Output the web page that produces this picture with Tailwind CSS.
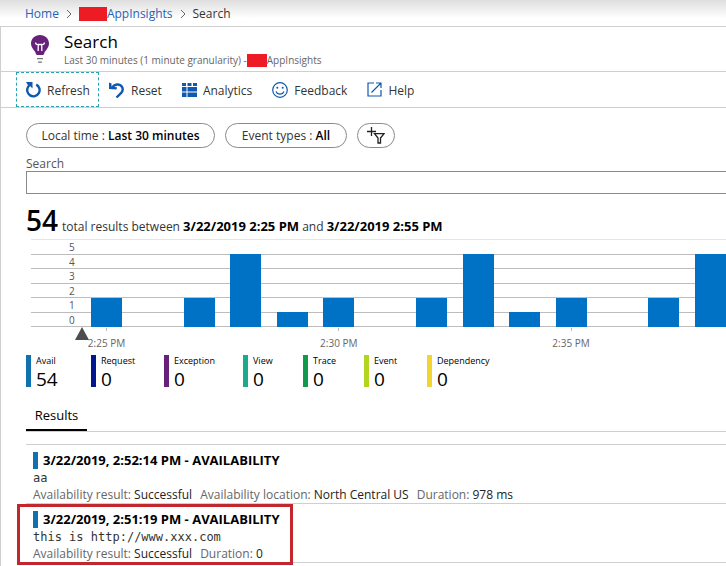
<!DOCTYPE html>
<html lang="en">

<head>
  <meta charset="UTF-8">
  <meta name="viewport" content="width=device-width, initial-scale=1.0">
  <title>Search - AppInsights</title>
  <script src="https://cdn.jsdelivr.net/npm/@tailwindcss/browser@4"></script>
</head>

<body class="min-h-screen flex flex-col overflow-x-hidden bg-white font-['Open_Sans',sans-serif] text-xs text-[#333333]">

  <!-- breadcrumb -->
  <nav aria-label="Breadcrumb" class="h-[26px] shrink-0 flex items-center gap-[7px] pl-[25px] pt-[2px] bg-linear-to-b from-[#dedede] to-white to-70%">
    <a href="#" class="text-[#2563b8]">Home</a>
    <svg class="w-[6px] h-[10px]" viewBox="0 0 6 10" fill="none" stroke="#666666"><path d="M1 1l4 4-4 4"></path></svg>
    <a href="#" class="flex items-center text-[#2563b8]"><span class="w-7 h-[14px] bg-[#ed1c24]"></span>AppInsights</a>
    <svg class="w-[6px] h-[10px]" viewBox="0 0 6 10" fill="none" stroke="#666666"><path d="M1 1l4 4-4 4"></path></svg>
    <span>Search</span>
  </nav>

  <main class="grow border-t border-l border-[#cfcfcf]">

    <!-- blade title -->
    <header class="h-11 flex items-center gap-[14px] pl-[29px]">
      <svg class="w-5 h-7" viewBox="0 0 20 28" aria-hidden="true">
        <path fill="#68217a" d="M10 0C4.800 0 1 3.900 1 8.600c0 2.800 1.300 4.700 2.700 6.400 1.200 1.500 1.900 2.300 2.100 3.600.1.900.6 1.400 1.400 1.400h5.600c.8 0 1.300-.5 1.400-1.400.2-1.300.9-2.100 2.100-3.600 1.400-1.700 2.700-3.600 2.700-6.400C19 3.900 15.200 0 10 0z"></path>
        <path fill="none" stroke="#ffffff" stroke-width="1.300" d="M8.200 16V9.500M11.800 16V9.500M5.500 7.500c0 2.500 2.700 2 2.700 2h3.600s2.700.5 2.700-2"></path>
        <path fill="#777777" d="M7 23h6v1.300H7zM8 26.500h4v1.300H8z"></path>
      </svg>
      <div class="pt-[2px]">
        <h1 class="text-[17px] leading-5 text-black">Search</h1>
        <p class="flex items-center text-[10px] leading-4 text-[#666666]">Last 30 minutes (1 minute granularity) -<span class="w-5 h-[13px] bg-[#ed1c24]"></span>AppInsights</p>
      </div>
    </header>

    <!-- command bar -->
    <div class="h-[37px] flex items-center border-y border-[#cfcfcf] pl-[15px]">
      <button type="button" class="h-[35px] w-[83px] flex items-center gap-[6px] pl-2 border border-dashed border-[#2aa0b4]">
        <svg class="w-4 h-4" viewBox="0 0 16 16" fill="none" stroke="#1058b0" stroke-width="2.400"><path d="M11.200 2.600A6.200 6.200 0 1 1 3.300 4.600L5 2.500"></path><path fill="#1058b0" stroke="none" d="M1 0h6.500v6.500L5.300 4.300 3 3.200z"></path></svg>
        <span class="pt-[2px]">Refresh</span>
      </button>
      <button type="button" class="flex items-center gap-[6px] ml-[10px]">
        <svg class="w-4 h-4" viewBox="0 0 16 16" fill="none" stroke="#1058b0" stroke-width="2.400"><path d="M3 5.500C6 2 10 1.700 12.200 3.800c2.300 2.300 1.800 5.300-.2 7.300L7.500 15.500"></path><path fill="#1058b0" stroke="none" d="M0 .5l2.500 1v3.200l5.500.6-.5 2.300L0 7z"></path></svg>
        <span class="pt-[2px]">Reset</span>
      </button>
      <button type="button" class="flex items-center gap-[6px] ml-5">
        <svg class="w-[15px] h-[14px]" viewBox="0 0 15 14" fill="#1058b0"><path d="M0 0h4v3H0zM5.500 0h4v3h-4zM11 0h4v3h-4zM0 4h4.500v4.500H0zM5.500 4H15v4.500H5.500zM0 9.500h4.500V14H0zM5.500 9.500H15V14H5.500z"></path></svg>
        <span class="pt-[2px]">Analytics</span>
      </button>
      <button type="button" class="flex items-center gap-[6px] ml-5">
        <svg class="w-4 h-4" viewBox="0 0 16 16" fill="none" stroke="#1058b0" stroke-width="1.200"><circle cx="8" cy="8" r="7.300"></circle><path d="M4 9.500c1.500 3.400 6.500 3.400 8 0"></path><circle cx="5.300" cy="5.800" r="1" fill="#1058b0" stroke="none"></circle><circle cx="10.700" cy="5.800" r="1" fill="#1058b0" stroke="none"></circle></svg>
        <span class="pt-[2px]">Feedback</span>
      </button>
      <button type="button" class="flex items-center gap-[6px] ml-5">
        <svg class="w-[15px] h-[15px]" viewBox="0 0 15 15" fill="none" stroke="#1058b0" stroke-width="1.200"><path d="M7 1H1v13h13V8M9 1h5v5M14 1L4.500 10.500"></path></svg>
        <span class="pt-[2px]">Help</span>
      </button>
    </div>

    <div class="pl-[25px] pt-[15px]">

      <!-- filters -->
      <div class="flex gap-[10px]">
        <button type="button" class="h-[25px] w-[189px] rounded-full border border-[#8a8a8a]">Local time : <b class="font-semibold text-black">Last 30 minutes</b></button>
        <button type="button" class="h-[25px] w-[122px] rounded-full border border-[#8a8a8a]">Event types : <b class="font-semibold text-black">All</b></button>
        <button type="button" aria-label="Add filter" class="h-[25px] w-[38px] flex items-center justify-center rounded-full border border-[#8a8a8a]">
          <svg class="w-[18px] h-[17px]" viewBox="0 0 18 17" fill="none" stroke="#222222" stroke-width="1.300"><path d="M4.500 0v9M0 4.500h9"></path><path d="M7.500 6.700h9.500l-3.500 4.300v5h-2.500v-5z"></path></svg>
        </button>
      </div>

      <label for="search" class="block mt-2 h-[15px] leading-4 text-[#555555]">Search</label>
      <input id="search" type="text" class="block w-full h-[23px] border border-r-0 border-[#8a8a8a] px-2 outline-none">

      <p class="flex items-baseline gap-1 mt-2 h-[37px] leading-9 whitespace-nowrap"><span class="text-[28px] font-semibold text-black">54</span><span>total results between <b class="text-[13px] font-bold text-black">3/22/2019 2:25 PM</b> and <b class="text-[13px] font-bold text-black">3/22/2019 2:55 PM</b></span></p>

      <!-- results per minute -->
      <div class="grid ml-[5px]">
        <div class="col-start-1 row-start-1 h-[88px] grid grid-rows-6 border-t border-t-[#e5e5e5] text-[10px] leading-[14px] text-[#555555]">
          <div class="border-b border-[#bdbdbd] pl-[38px]">5</div>
          <div class="border-b border-[#bdbdbd] pl-[38px]">4</div>
          <div class="border-b border-[#bdbdbd] pl-[38px]">3</div>
          <div class="border-b border-[#bdbdbd] pl-[38px]">2</div>
          <div class="border-b border-[#bdbdbd] pl-[38px]">1</div>
          <div class="border-b border-[#bdbdbd] pl-[38px]">0</div>
        </div>
        <div class="col-start-1 row-start-1 h-[88px] flex items-end justify-between pl-[60px]">
          <div class="w-[31px] bg-[#0072c6]" style="height: 33.3%"></div>
          <div class="w-[31px] bg-[#0072c6]" style="height: 0%"></div>
          <div class="w-[31px] bg-[#0072c6]" style="height: 33.3%"></div>
          <div class="w-[31px] bg-[#0072c6]" style="height: 83.3%"></div>
          <div class="w-[31px] bg-[#0072c6]" style="height: 16.7%"></div>
          <div class="w-[31px] bg-[#0072c6]" style="height: 33.3%"></div>
          <div class="w-[31px] bg-[#0072c6]" style="height: 0%"></div>
          <div class="w-[31px] bg-[#0072c6]" style="height: 33.3%"></div>
          <div class="w-[31px] bg-[#0072c6]" style="height: 83.3%"></div>
          <div class="w-[31px] bg-[#0072c6]" style="height: 16.7%"></div>
          <div class="w-[31px] bg-[#0072c6]" style="height: 33.3%"></div>
          <div class="w-[31px] bg-[#0072c6]" style="height: 0%"></div>
          <div class="w-[31px] bg-[#0072c6]" style="height: 33.3%"></div>
          <div class="w-[31px] bg-[#0072c6]" style="height: 83.3%"></div>
        </div>
        <div class="h-7 flex pl-11 text-[10px] leading-4 text-[#666666]">
          <svg class="w-[14px] h-[13px] mr-[2px] shrink-0" viewBox="0 0 14 13" fill="#4d4d4d"><path d="M7 0l7 13H0z"></path></svg>
          <div class="grow flex justify-between">
            <div class="w-[31px] flex flex-col items-center gap-1 pt-px whitespace-nowrap"><span class="w-px h-[3px] bg-[#bdbdbd]"></span>2:25 PM</div>
            <div class="w-[31px]"></div>
            <div class="w-[31px]"></div>
            <div class="w-[31px]"></div>
            <div class="w-[31px]"></div>
            <div class="w-[31px] flex flex-col items-center gap-1 pt-px whitespace-nowrap"><span class="w-px h-[3px] bg-[#bdbdbd]"></span>2:30 PM</div>
            <div class="w-[31px]"></div>
            <div class="w-[31px]"></div>
            <div class="w-[31px]"></div>
            <div class="w-[31px]"></div>
            <div class="w-[31px] flex flex-col items-center gap-1 pt-px whitespace-nowrap"><span class="w-px h-[3px] bg-[#bdbdbd]"></span>2:35 PM</div>
            <div class="w-[31px]"></div>
            <div class="w-[31px]"></div>
            <div class="w-[31px]"></div>
          </div>
        </div>
      </div>

      <!-- totals by telemetry type -->
      <dl class="grid grid-cols-[65px_73px_79px_60px_61px_63px_auto] text-[9px] text-black">
        <div class="h-8 border-l-5 border-[#1070b0] pl-[5px]"><dt class="leading-3">Avail</dt><dd class="text-[19px] leading-6">54</dd></div>
        <div class="h-8 border-l-5 border-[#00188f] pl-[5px]"><dt class="leading-3">Request</dt><dd class="text-[19px] leading-6">0</dd></div>
        <div class="h-8 border-l-5 border-[#68217a] pl-[5px]"><dt class="leading-3">Exception</dt><dd class="text-[19px] leading-6">0</dd></div>
        <div class="h-8 border-l-5 border-[#1aab8e] pl-[5px]"><dt class="leading-3">View</dt><dd class="text-[19px] leading-6">0</dd></div>
        <div class="h-8 border-l-5 border-[#109a4c] pl-[5px]"><dt class="leading-3">Trace</dt><dd class="text-[19px] leading-6">0</dd></div>
        <div class="h-8 border-l-5 border-[#b4d422] pl-[5px]"><dt class="leading-3">Event</dt><dd class="text-[19px] leading-6">0</dd></div>
        <div class="h-8 border-l-5 border-[#f2d433] pl-[5px]"><dt class="leading-3">Dependency</dt><dd class="text-[19px] leading-6">0</dd></div>
      </dl>

      <div role="tablist" class="flex mt-4 border-b border-[#cfcfcf]">
        <button type="button" role="tab" aria-selected="true" class="h-7 w-[61px] border-b-2 border-black text-[13px] text-black">Results</button>
      </div>

      <!-- results -->
      <ul class="mt-3 border-t border-[#cfcfcf]">
        <li class="h-[59px] border-b border-[#cfcfcf] pt-[7px] pl-[7px] whitespace-nowrap">
          <h2 class="h-[17px] border-l-5 border-[#1070b0] pl-[5px] text-[13px] leading-[17px] font-bold text-black">3/22/2019, 2:52:14 PM - AVAILABILITY</h2>
          <p class="leading-[18px] font-['DejaVu_Sans_Mono',monospace]">aa</p>
          <p class="flex gap-2 leading-4 text-[#666666]"><span>Availability result: <span class="text-[#222222]">Successful</span></span><span>Availability location: <span class="text-[#222222]">North Central US</span></span><span>Duration: <span class="text-[#222222]">978 ms</span></span></p>
        </li>
        <li class="relative h-[59px] border-b border-[#cfcfcf] pt-[7px] pl-[7px] whitespace-nowrap">
          <h2 class="h-[17px] border-l-5 border-[#1070b0] pl-[5px] text-[13px] leading-[17px] font-bold text-black">3/22/2019, 2:51:19 PM - AVAILABILITY</h2>
          <p class="leading-[18px] font-['DejaVu_Sans_Mono',monospace]">this is http://www.xxx.com</p>
          <p class="flex gap-2 leading-4 text-[#666666]"><span>Availability result: <span class="text-[#222222]">Successful</span></span><span>Duration: <span class="text-[#222222]">0</span></span></p>
          <!-- highlight frame -->
          <div class="absolute top-0 -left-[9px] w-[276px] h-[61px] border-3 border-[#c1272d]"></div>
        </li>
      </ul>
    </div>
  </main>
</body>

</html>
